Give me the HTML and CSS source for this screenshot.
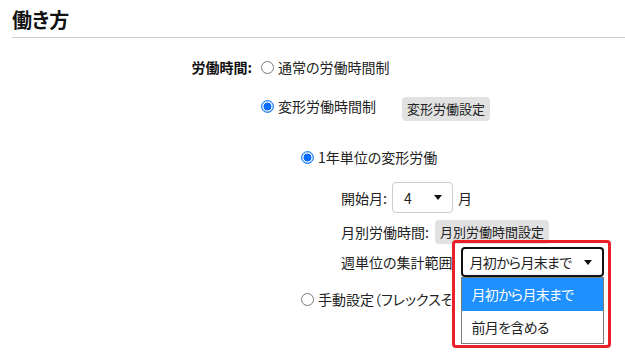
FILE: index.html
```html
<!DOCTYPE html>
<html lang="ja">
<head>
<meta charset="utf-8">
<title>働き方</title>
<link rel="stylesheet" href="styles.css">
</head>
<body>
<div class="page">
  <div class="section-head"><h2 class="title">働き方</h2></div>
  <div class="form-row">
    <div class="label">労働時間:</div>
    <div class="options">
      <div class="opt opt-1"><span class="radio"></span><span>通常の労働時間制</span></div>
      <div class="opt opt-2"><span class="radio checked"></span><span>変形労働時間制</span><button class="btn btn-hen">変形労働設定</button></div>
      <div class="sub">
        <div class="opt opt-3"><span class="radio checked"></span><span>1年単位の変形労働</span></div>
        <div class="fields">
          <div class="field f-month">
            <span>開始月:</span>
            <div class="select small"><span>4</span><span class="caret"></span></div>
            <span>月</span>
          </div>
          <div class="field f-hours">
            <span>月別労働時間:</span>
            <button class="btn">月別労働時間設定</button>
          </div>
          <div class="field f-range">
            <span>週単位の集計範囲</span>
            <div class="select-wrap">
              <div class="select focus"><span class="sel-text">月初から月末まで</span><span class="caret"></span></div>
              <ul class="dropdown">
                <li class="item active">月初から月末まで</li>
                <li class="item">前月を含める</li>
              </ul>
              <div class="highlight"></div>
            </div>
          </div>
        </div>
        <div class="opt opt-4"><span class="radio"></span><span class="manual">手動設定（フレックスその他）</span></div>
      </div>
    </div>
  </div>
</div>
</body>
</html>
```

FILE: styles.css
```css
html, body {
  margin: 0;
  padding: 0;
  background: #fff;
}
body {
  font-family: "Noto Sans CJK JP", "Noto Sans", sans-serif;
  font-size: 14px;
  color: #222;
  font-feature-settings: "palt";
  width: 625px;
  height: 354px;
  overflow: hidden;
}
.section-head {
  margin-left: 12px;
  padding: 8px 0 5px;
  border-bottom: 1px solid #cfcfcf;
}
.title {
  margin: 0;
  font-size: 20px;
  line-height: 24px;
  font-weight: 700;
  color: #111;
}
.form-row {
  display: flex;
  margin-top: 15px;
}
.label {
  width: 252px;
  text-align: right;
  font-weight: 700;
  line-height: 28px;
  margin-right: 8px;
  color: #111;
}
.options {
  display: flex;
  flex-direction: column;
}
.opt {
  display: flex;
  align-items: center;
  height: 28px;
  white-space: nowrap;
}
.opt-2 {
  height: 30px;
  margin-top: 10px;
}
.opt-3 {
  margin-top: 22px;
}
.opt-4 {
  margin-top: 8px;
}
.manual {
  display: block;
  width: 133px;
  overflow: hidden;
  white-space: nowrap;
}
.radio {
  box-sizing: border-box;
  width: 13px;
  height: 13px;
  border-radius: 50%;
  border: 1px solid #7a7a7a;
  background: #fff;
  margin: 0 4px 0 1px;
  flex: none;
}
.radio.checked {
  border: 1px solid #1a7cf5;
  background: radial-gradient(circle at center, #0a6cff 0 3.6px, #fff 4.3px);
  box-shadow: 0 0 0 0.5px #5aa0ff inset;
}
.btn {
  font-family: inherit;
  font-feature-settings: "palt";
  font-size: 13px;
  color: #222;
  background: #e1e1e1;
  border: none;
  border-radius: 4px;
  height: 24px;
  padding: 0 5px;
  line-height: 24px;
}
.btn-hen {
  margin-left: 26px;
  margin-top: 6px;
}
.sub {
  padding-left: 40px;
  display: flex;
  flex-direction: column;
}
.fields {
  padding-left: 41px;
  display: flex;
  flex-direction: column;
}
.field {
  display: flex;
  align-items: center;
  white-space: nowrap;
}
.f-month {
  height: 31px;
  margin-top: 11px;
  gap: 5px;
}
.f-hours {
  height: 24px;
  margin-top: 7px;
  gap: 6px;
}
.f-range {
  height: 30px;
  margin-top: 3px;
  gap: 8px;
}
.select {
  box-sizing: border-box;
  display: flex;
  align-items: center;
  justify-content: space-between;
  background: #fff;
}
.select.small {
  width: 61px;
  height: 31px;
  border: 1px solid #cccccc;
  border-radius: 4px;
  padding: 0 10px 0 11px;
}
.select-wrap {
  position: relative;
}
.select.focus {
  width: 143px;
  height: 30px;
  border: 2px solid #111;
  border-radius: 4px;
  padding: 0 10px 0 7px;
}
.sel-text,
.item {
  letter-spacing: -0.7px;
}
.caret {
  width: 0;
  height: 0;
  border-left: 4px solid transparent;
  border-right: 4px solid transparent;
  border-top: 5px solid #111;
}
.dropdown {
  position: absolute;
  left: 0;
  top: 30px;
  width: 143px;
  box-sizing: border-box;
  margin: 0;
  padding: 0;
  list-style: none;
  background: #fff;
  border: 1px solid #7a7a7a;
  z-index: 2;
}
.item {
  height: 32px;
  line-height: 32px;
  padding-left: 10px;
  color: #222;
}
.item.active {
  height: 33px;
  line-height: 33px;
  background: #1e90ff;
  color: #fff;
}
.highlight {
  position: absolute;
  left: -9px;
  top: -7px;
  width: 159px;
  height: 108px;
  box-sizing: border-box;
  border: 3px solid #ea1f27;
  border-radius: 4px;
  z-index: 3;
  pointer-events: none;
}
```
